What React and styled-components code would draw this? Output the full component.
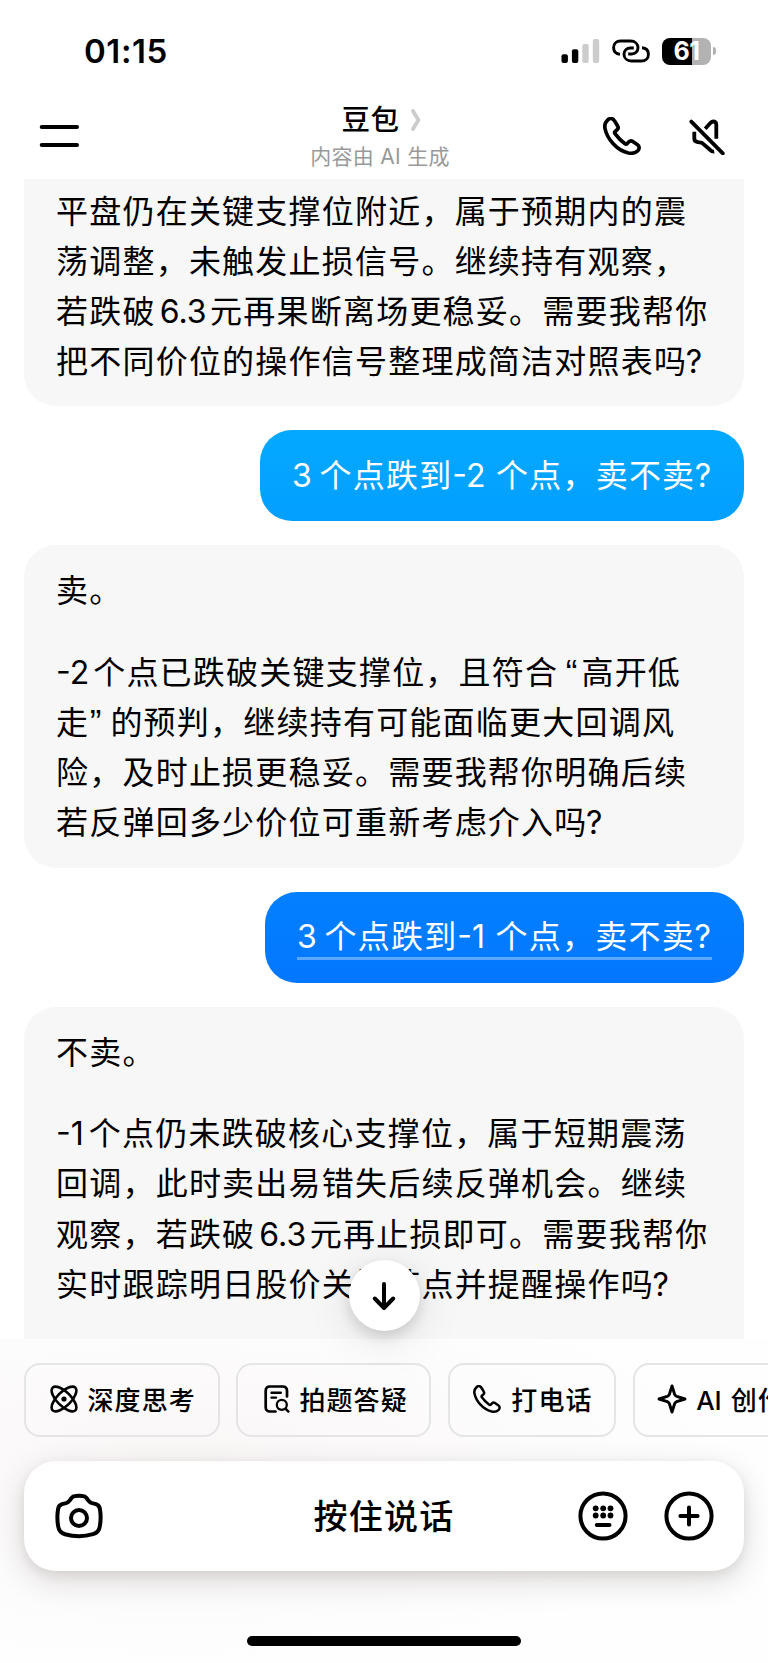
import React from "react";
import styled, { createGlobalStyle } from "styled-components";

const GlobalStyle = createGlobalStyle`
  * {
    box-sizing: border-box;
  }
  body {
    margin: 0;
    background: #fff;
    color: #000;
    font-family: Inter, "Noto Sans CJK SC", sans-serif;
    text-autospace: no-autospace;
    text-spacing-trim: space-all;
  }
  svg {
    display: block;
    flex: none;
  }
`;

const Screen = styled.div`
  width: 768px;
  height: 1663px;
  display: flex;
  flex-direction: column;
  overflow: hidden;
  background: #fff;
`;

const StatusBar = styled.div`
  height: 102px;
  flex: none;
  display: flex;
  align-items: center;
  justify-content: space-between;
  padding: 0 52px 0 84px;
`;

const Clock = styled.span`
  font-size: 33px;
  font-weight: 600;
  line-height: 40px;
  letter-spacing: 0.6px;
`;

const StatusIcons = styled.div`
  display: flex;
  align-items: center;
  gap: 12px;
`;

const Battery = styled.div`
  display: flex;
  align-items: center;
  gap: 2px;
`;

const BatteryBody = styled.div`
  width: 49px;
  height: 27px;
  border-radius: 8px;
  background: linear-gradient(to right, #000 61%, #b2b2b2 61%);
  color: #fff;
  font-size: 25px;
  font-weight: 700;
  line-height: 27.5px;
  letter-spacing: -0.4px;
  text-align: center;
`;

const BatteryTip = styled.div`
  width: 3px;
  height: 8px;
  border-radius: 0 3px 3px 0;
  background: #b2b2b2;
`;

const Header = styled.header`
  height: 77px;
  flex: none;
  display: grid;
  grid-template-columns: 1fr auto 1fr;
  padding: 0 43px 0 39px;
`;

const HeaderTitle = styled.div`
  display: flex;
  flex-direction: column;
  align-items: center;
`;

const BotName = styled.div`
  display: flex;
  align-items: center;
  gap: 11px;
  height: 32px;
  margin-top: 2px;
  margin-right: 2px;
  font-size: 28.5px;
  line-height: 32px;
  font-weight: 500;
  letter-spacing: 0.5px;
`;

const Notice = styled.div`
  font-size: 21px;
  line-height: 30px;
  height: 30px;
  margin-top: 6px;
  margin-right: 4px;
  letter-spacing: 0.3px;
  color: #999;
`;

const MenuButton = styled.div`
  display: flex;
  align-items: flex-start;
  padding-top: 23px;
`;

const HeaderActions = styled.div`
  display: flex;
  justify-content: flex-end;
  align-items: flex-start;
  gap: 47px;
  padding-top: 15px;
`;

const Conversation = styled.main`
  height: 1160px;
  flex: none;
  display: flex;
  flex-direction: column;
  gap: 24px;
  padding: 0 24px;
  overflow: hidden;
`;

const BotBubble = styled.div`
  height: ${({ $height }) => $height}px;
  flex: none;
  background: #f7f7f7;
  padding: ${({ $top }) => $top}px 32px 0;
  border-radius: ${({ $radius }) => $radius};
`;

const UserBubble = styled.div`
  height: 91px;
  flex: none;
  align-self: flex-end;
  width: ${({ $width }) => $width}px;
  padding: 20.5px 32px 0;
  border-radius: 32px;
  background: linear-gradient(${({ $from }) => $from}, ${({ $to }) => $to});
  color: #fff;
`;

const Line = styled.div`
  font-size: 32px;
  line-height: 50.2px;
  height: 50.2px;
  letter-spacing: 1.22px;
  white-space: pre;
  margin-bottom: ${({ $last }) => ($last ? "31.5px" : 0)};
`;

const Underlined = styled.span`
  display: block;
  height: 47.5px;
  border-bottom: 3px solid rgba(255, 255, 255, 0.35);
`;

const Latin = styled.span`
  letter-spacing: 0;
  word-spacing: ${({ $space = 0 }) => $space}px;
  margin-left: ${({ $before = 0 }) => $before}px;
  margin-right: ${({ $after = 0 }) => $after}px;
`;

const Quote = styled(Latin)`
  font-family: "Liberation Sans", sans-serif;
  font-size: 35px;
  line-height: 1;
`;

const Footer = styled.footer`
  flex: 1;
  position: relative;
  display: flex;
  flex-direction: column;
  background: radial-gradient(ellipse 560px 200px at 180px 130px, #f9f6f6, #fdfcfc 70%, #fefefe 100%);
`;

const ScrollDown = styled.button`
  position: absolute;
  left: 348.5px;
  top: -79px;
  width: 71px;
  height: 71px;
  display: flex;
  align-items: center;
  justify-content: center;
  padding: 0;
  border: 0;
  border-radius: 50%;
  background: #fff;
  box-shadow: 0 6px 14px rgba(0, 0, 0, 0.14), 0 8px 48px rgba(0, 0, 0, 0.1);
`;

const Chips = styled.div`
  display: flex;
  gap: 16.4px;
  margin: 23.5px 0 24px;
  padding-left: 24px;
  overflow: hidden;
`;

const Chip = styled.div`
  width: ${({ $width }) => $width}px;
  height: 74.5px;
  flex: none;
  display: flex;
  align-items: center;
  padding: 0 0 2px ${({ $left }) => $left}px;
  gap: ${({ $gap = 10 }) => $gap}px;
  border: 2px solid #e6e5e5;
  border-radius: 16px;
  font-size: 26px;
  font-weight: 500;
  letter-spacing: 1.1px;
  white-space: pre;
`;

const InputBar = styled.div`
  height: 110px;
  flex: none;
  margin: 0 24px;
  padding: 0 30px 0 30px;
  display: grid;
  grid-template-columns: 1fr auto 1fr;
  align-items: center;
  border-radius: 32px;
  background: #fff;
  box-shadow: 0 10px 32px rgba(30, 15, 10, 0.14), 0 4px 12px rgba(30, 15, 10, 0.08);
`;

const HoldToTalk = styled.span`
  margin-bottom: 3px;
  font-size: 34px;
  font-weight: 500;
  letter-spacing: 1.2px;
`;

const InputActions = styled.div`
  display: flex;
  justify-content: flex-end;
  gap: 36.5px;
`;

const HomeIndicator = styled.div`
  width: 274px;
  height: 10px;
  margin: 65px auto 0;
  border-radius: 5px;
  background: #000;
`;

const SignalIcon = () => (
  <svg width="39" height="24" viewBox="0 0 39 24">
    <rect x="0.5" y="15.3" width="6.4" height="8.7" rx="2" />
    <rect x="10.9" y="10.3" width="6.4" height="13.7" rx="2" />
    <rect x="21.3" y="5" width="6.4" height="19" rx="2" fill="#ccc" />
    <rect x="31.8" y="0" width="6.4" height="24" rx="2" fill="#ccc" />
  </svg>
);

const HotspotIcon = () => (
  <svg width="38" height="24" viewBox="0 0 38 24" fill="none" stroke="#000" strokeWidth="2.9" strokeLinecap="butt">
    <path d="M8 15.2C4 15 1.6 12.5 1.6 8.6C1.6 4.6 4.6 2 8.5 2H18.5C23 2 26 5 26 8.8C26 12.4 23.2 15 19.8 15H16.2" />
    <path d="M30 8.8C34 9 36.4 11.5 36.4 15.4C36.4 19.4 33.4 22 29.5 22H19.5C15 22 12 19 12 15.2C12 11.6 14.8 9 18.2 9H21.8" />
  </svg>
);

const MenuIcon = () => (
  <svg width="40" height="22" viewBox="0 0 40 22" stroke="#000" strokeWidth="4" strokeLinecap="round">
    <path d="M2.7 2.1H38M2.7 19.9H38" />
  </svg>
);

const ChevronIcon = () => (
  <svg width="10" height="22" viewBox="0 0 10 22" fill="none" stroke="#ccc" strokeWidth="3.8" strokeLinecap="round" strokeLinejoin="round">
    <path d="M2 2L7.4 11L2 20" />
  </svg>
);

const PhoneIcon = ({ size, stroke }) => (
  <svg width={size} height={size} viewBox="0 0 38 38" fill="none" stroke="#000" strokeWidth={stroke} strokeLinejoin="round">
    <path d="M10.6 2.7C9 1.2 6.6 1.2 5 2.7C2.3 5.2 1.3 8 2 11.5C4.2 22.5 14.5 33.8 25.5 36C29.5 36.7 32.5 36 34.8 33.7C36.8 31.6 36.5 29 34.2 27.5L29.8 24.5C28.4 23.6 27 23.7 25.9 24.8L24.2 26.6C23.5 27.3 22.6 27.3 21.7 26.6C18 23.9 14.6 20.2 12 16.7C11.5 15.9 11.5 15.2 12.1 14.6L14.2 12.6C15.3 11.6 15.4 10.4 14.7 9.2C13.5 6.8 12.3 4.4 10.6 2.7Z" />
  </svg>
);

const MutedIcon = () => (
  <svg width="37" height="38" viewBox="0 0 37 38" fill="none" stroke="#000" strokeWidth="3.8" strokeLinejoin="round">
    <path d="M3.3 4.6L34.8 36.4" strokeLinecap="round" />
    <path d="M17.2 11.8L22.6 5.8C25 3.4 28.3 4.4 28.3 8V21.8" />
    <path d="M6.3 14.8V21.6C6.3 23.8 7.4 24.8 9.6 25L14 25.9L22 32.8C23.3 34.1 24.6 34.8 26.2 34.6" />
  </svg>
);

const ArrowDownIcon = () => (
  <svg width="26" height="30" viewBox="0 0 26 30" fill="none" stroke="#000" strokeWidth="4" strokeLinecap="round" strokeLinejoin="round">
    <path d="M13 3V27M3.8 17.5L13 27L22.2 17.5" />
  </svg>
);

const ThinkIcon = () => (
  <svg width="28" height="28" viewBox="0 0 28 28" fill="none" stroke="#000" strokeWidth="2.6">
    <ellipse cx="14" cy="14" rx="16" ry="7" transform="rotate(45 14 14)" />
    <ellipse cx="14" cy="14" rx="16" ry="7" transform="rotate(-45 14 14)" />
    <circle cx="14" cy="14" r="2.6" fill="#000" stroke="none" />
  </svg>
);

const SolveIcon = () => (
  <svg width="26" height="28" viewBox="0 0 26 28" fill="none" stroke="#000" strokeWidth="2.7" strokeLinecap="round">
    <path d="M11.5 26.5H6C3.3 26.5 1.7 24.9 1.7 22.2V5.8C1.7 3.1 3.3 1.5 6 1.5H18.7C21.4 1.5 23 3.1 23 5.8V11.5" />
    <path d="M7.5 7.8H16.8M7.5 12.6H12" strokeWidth="2.4" />
    <circle cx="17.8" cy="19.8" r="5" strokeWidth="2.3" />
    <path d="M21.5 23.6L24.4 26.6" strokeWidth="2.4" />
  </svg>
);

const SparkIcon = () => (
  <svg width="30" height="30" viewBox="0 0 30 30" fill="none" stroke="#000" strokeWidth="2.9" strokeLinejoin="round">
    <path d="M15 2L17.6 10.3C18 11.4 18.6 12 19.7 12.4L28 15L19.7 17.6C18.6 18 18 18.6 17.6 19.7L15 28L12.4 19.7C12 18.6 11.4 18 10.3 17.6L2 15L10.3 12.4C11.4 12 12 11.4 12.4 10.3Z" />
  </svg>
);

const CameraIcon = () => (
  <svg width="50" height="46" viewBox="0 0 50 46" fill="none" stroke="#000" strokeWidth="4" strokeLinejoin="round">
    <path d="M17.5 5C18.6 3.6 19.9 3.1 21.5 3C23.8 2.8 26.2 2.8 28.5 3C30.1 3.1 31.4 3.6 32.5 5L34.2 7.4C35.2 8.8 36.2 9.6 38 10.1L42 11.1C44.4 11.9 45.5 13.4 45.9 15.8C46.9 21.5 46.9 27 45.9 33C45.3 37.5 43.2 40 39 41.2C30 43.7 20 43.7 11 41.2C6.8 40 4.7 37.5 4.1 33C3.1 27 3.1 21.5 4.1 15.8C4.5 13.4 5.6 11.9 8 11.1L12 10.1C13.8 9.6 14.8 8.8 15.8 7.4Z" />
    <circle cx="25" cy="25" r="8" />
  </svg>
);

const KeyboardIcon = () => (
  <svg width="50" height="50" viewBox="0 0 50 50" fill="none" stroke="#000" strokeWidth="4" strokeLinecap="round">
    <circle cx="25" cy="25" r="22.6" />
    {[17.3, 24.5].map((y) =>
      [17.7, 25.2, 32.5].map((x) => (
        <circle key={`${x}-${y}`} cx={x} cy={y} r="2.9" fill="#000" stroke="none" />
      ))
    )}
    <path d="M18.8 33.9H31.5" />
  </svg>
);

const PlusIcon = () => (
  <svg width="50" height="50" viewBox="0 0 50 50" fill="none" stroke="#000" strokeWidth="4" strokeLinecap="round">
    <circle cx="25" cy="25" r="22.6" />
    <path d="M25 16.4V33.6M16.4 25H33.6" />
  </svg>
);

const Question = ({ drop }) => (
  <>
    <Latin $space={-1.3}>{"3 "}</Latin>
    个点跌到
    <Latin $space={1.5}>{`${drop} `}</Latin>
    个点，卖不卖
    <Latin $before={-0.5}>?</Latin>
  </>
);

const App = () => {
  return (
    <Screen>
      <GlobalStyle />
      <StatusBar>
        <Clock>01:15</Clock>
        <StatusIcons>
          <SignalIcon />
          <HotspotIcon />
          <Battery>
            <BatteryBody>61</BatteryBody>
            <BatteryTip />
          </Battery>
        </StatusIcons>
      </StatusBar>
      <Header>
        <MenuButton>
          <MenuIcon />
        </MenuButton>
        <HeaderTitle>
          <BotName>
            豆包
            <ChevronIcon />
          </BotName>
          <Notice>内容由 AI 生成</Notice>
        </HeaderTitle>
        <HeaderActions>
          <PhoneIcon size={38} stroke={3.7} />
          <MutedIcon />
        </HeaderActions>
      </Header>

      <Conversation>
        <BotBubble $height={227} $top={7.5} $radius="0 0 32px 32px">
          <Line>平盘仍在关键支撑位附近，属于预期内的震</Line>
          <Line>荡调整，未触发止损信号。继续持有观察，</Line>
          <Line>
            若跌破<Latin $before={4} $after={3.5}>6.3</Latin>元再果断离场更稳妥。需要我帮你
          </Line>
          <Line>
            把不同价位的操作信号整理成简洁对照表吗<Latin $before={-1.5}>?</Latin>
          </Line>
        </BotBubble>
        <UserBubble $width={484} $from="#04a9ff" $to="#039fff">
          <Line>
            <Question drop="-2" />
          </Line>
        </UserBubble>
        <BotBubble $height={322.5} $top={21} $radius="32px">
          <Line $last>卖。</Line>
          <Line>
            <Latin $after={4}>-2</Latin>个点已跌破关键支撑位，且符合<Quote $before={7.5} $after={4}>“</Quote>高开低
          </Line>
          <Line>
            走<Quote $after={9} $before={0.5}>”</Quote>的预判，继续持有可能面临更大回调风
          </Line>
          <Line>险，及时止损更稳妥。需要我帮你明确后续</Line>
          <Line>
            若反弹回多少价位可重新考虑介入吗<Latin $before={-1.5}>?</Latin>
          </Line>
        </BotBubble>
        <UserBubble $width={479} $from="#0380ff" $to="#0377ff">
          <Line>
            <Underlined>
              <Question drop="-1" />
            </Underlined>
          </Line>
        </UserBubble>
        <BotBubble $height={334} $top={21} $radius="32px 32px 0 0">
          <Line $last>不卖。</Line>
          <Line>
            <Latin $after={5}>-1</Latin>个点仍未跌破核心支撑位，属于短期震荡
          </Line>
          <Line>回调，此时卖出易错失后续反弹机会。继续</Line>
          <Line>
            观察，若跌破<Latin $before={4} $after={3.5}>6.3</Latin>元再止损即可。需要我帮你
          </Line>
          <Line>
            实时跟踪明日股价关键节点并提醒操作吗<Latin $before={-1.5}>?</Latin>
          </Line>
        </BotBubble>
      </Conversation>

      <Footer>
        <ScrollDown>
          <ArrowDownIcon />
        </ScrollDown>
        <Chips>
          <Chip $width={195.5} $left={23.5}>
            <ThinkIcon />
            深度思考
          </Chip>
          <Chip $width={195.5} $left={26} $gap={9.5}>
            <SolveIcon />
            拍题答疑
          </Chip>
          <Chip $width={168.5} $left={23.5}>
            <PhoneIcon size={28} stroke={3.4} />
            打电话
          </Chip>
          <Chip $width={190} $left={22.5} $gap={9}>
            <SparkIcon />
            <span>
              <Latin $space={2}>{"AI "}</Latin>创作
            </span>
          </Chip>
        </Chips>
        <InputBar>
          <CameraIcon />
          <HoldToTalk>按住说话</HoldToTalk>
          <InputActions>
            <KeyboardIcon />
            <PlusIcon />
          </InputActions>
        </InputBar>
        <HomeIndicator />
      </Footer>
    </Screen>
  );
};

export default App;
